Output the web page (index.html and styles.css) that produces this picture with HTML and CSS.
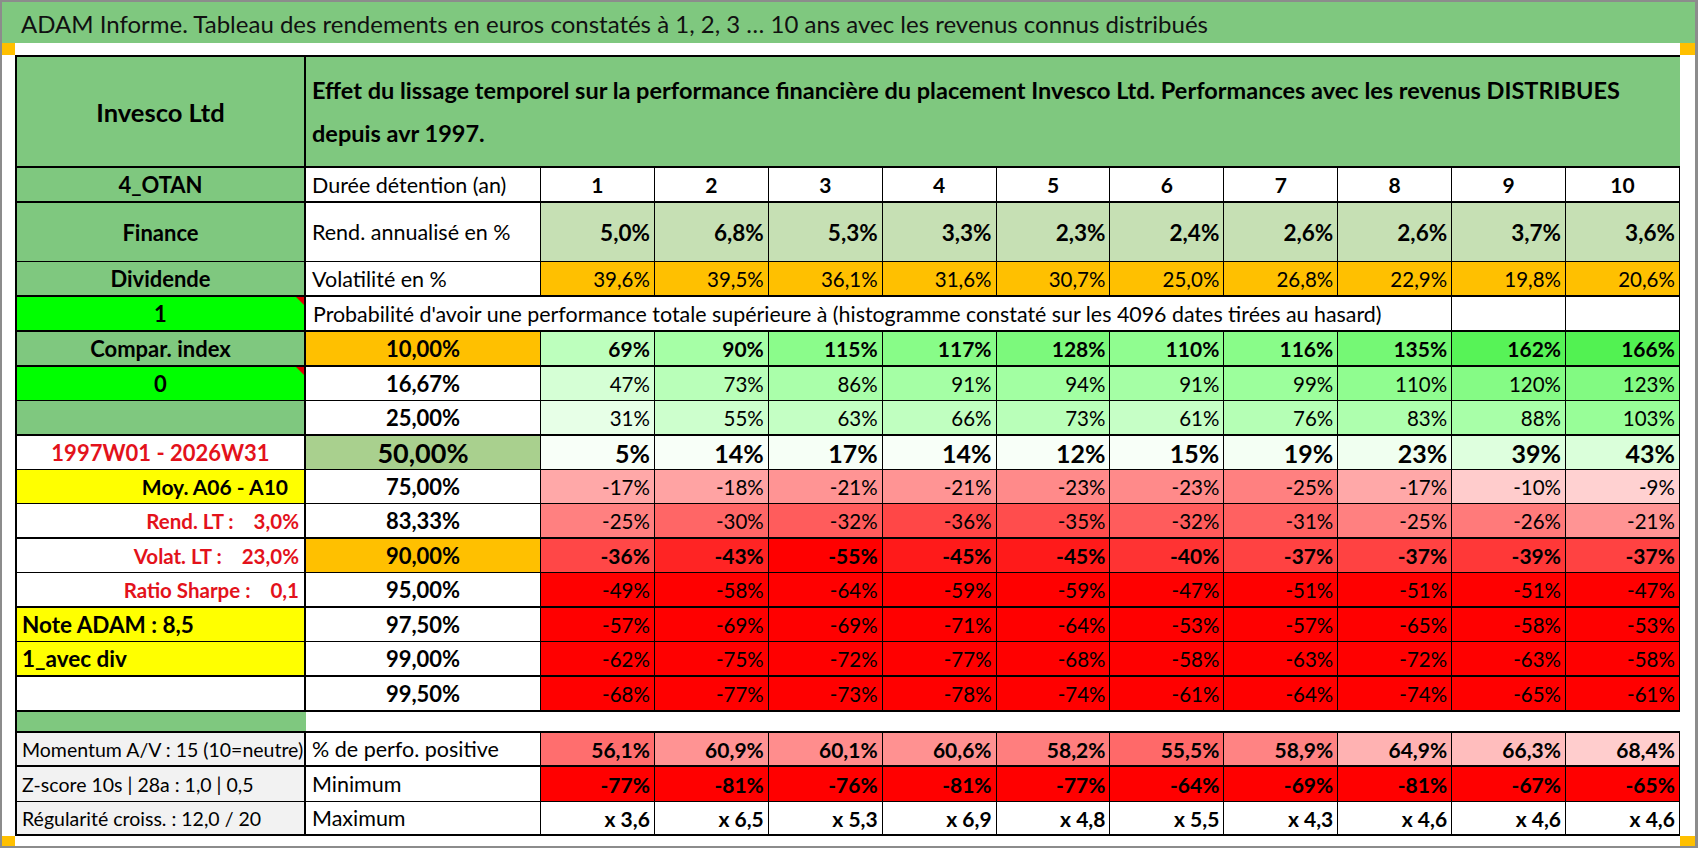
FILE: index.html
```html
<!DOCTYPE html>
<html lang="fr">
<head>
<meta charset="utf-8">
<title>ADAM Informe – Invesco Ltd</title>
<link rel="stylesheet" href="styles.css">
</head>
<body>
<div class="frame">
  <div class="title">ADAM Informe. Tableau des rendements en euros constatés à 1, 2, 3 … 10 ans avec les revenus connus distribués</div>
  <div class="strip"><span class="mark"></span><span class="mark mark-r"></span></div>
  <div class="sheet">
    <div class="row thick">
      <div class="c a big">Invesco Ltd</div>
      <div class="c effet"><span>Effet du lissage temporel sur la performance financière du placement Invesco Ltd. Performances avec les revenus DISTRIBUES<br>depuis avr 1997.</span></div>
    </div>

    <div class="row thick">
      <div class="c a">4_OTAN</div>
      <div class="c b">Durée détention (an)</div>
      <div class="c hd">1</div><div class="c hd">2</div><div class="c hd">3</div><div class="c hd">4</div><div class="c hd">5</div>
      <div class="c hd">6</div><div class="c hd">7</div><div class="c hd">8</div><div class="c hd">9</div><div class="c hd">10</div>
    </div>

    <div class="row">
      <div class="c a">Finance</div>
      <div class="c b">Rend. annualisé en %</div>
      <div class="c n rend">5,0%</div><div class="c n rend">6,8%</div><div class="c n rend">5,3%</div><div class="c n rend">3,3%</div><div class="c n rend">2,3%</div>
      <div class="c n rend">2,4%</div><div class="c n rend">2,6%</div><div class="c n rend">2,6%</div><div class="c n rend">3,7%</div><div class="c n rend">3,6%</div>
    </div>

    <div class="row thick">
      <div class="c a">Dividende</div>
      <div class="c b">Volatilité en %</div>
      <div class="c n vol">39,6%</div><div class="c n vol">39,5%</div><div class="c n vol">36,1%</div><div class="c n vol">31,6%</div><div class="c n vol">30,7%</div>
      <div class="c n vol">25,0%</div><div class="c n vol">26,8%</div><div class="c n vol">22,9%</div><div class="c n vol">19,8%</div><div class="c n vol">20,6%</div>
    </div>

    <div class="row thick">
      <div class="c a lime note">1</div>
      <div class="c prob">Probabilité d'avoir une performance totale supérieure à (histogramme constaté sur les 4096 dates tirées au hasard)</div>
      <div class="c"></div><div class="c"></div>
    </div>

    <div class="row thick">
      <div class="c a">Compar. index</div>
      <div class="c p orange">10,00%</div>
      <div class="c n bd" style="background:rgb(189,255,189)">69%</div>
      <div class="c n bd" style="background:rgb(166,255,166)">90%</div>
      <div class="c n bd" style="background:rgb(139,252,139)">115%</div>
      <div class="c n bd" style="background:rgb(136,252,136)">117%</div>
      <div class="c n bd" style="background:rgb(124,249,124)">128%</div>
      <div class="c n bd" style="background:rgb(144,253,144)">110%</div>
      <div class="c n bd" style="background:rgb(137,252,137)">116%</div>
      <div class="c n bd" style="background:rgb(117,248,117)">135%</div>
      <div class="c n bd" style="background:rgb(87,243,87)">162%</div>
      <div class="c n bd" style="background:rgb(82,242,82)">166%</div>
    </div>

    <div class="row">
      <div class="c a lime note">0</div>
      <div class="c p">16,67%</div>
      <div class="c n" style="background:rgb(213,255,213)">47%</div>
      <div class="c n" style="background:rgb(185,255,185)">73%</div>
      <div class="c n" style="background:rgb(170,255,170)">86%</div>
      <div class="c n" style="background:rgb(165,255,165)">91%</div>
      <div class="c n" style="background:rgb(162,255,162)">94%</div>
      <div class="c n" style="background:rgb(165,255,165)">91%</div>
      <div class="c n" style="background:rgb(156,255,156)">99%</div>
      <div class="c n" style="background:rgb(144,253,144)">110%</div>
      <div class="c n" style="background:rgb(133,251,133)">120%</div>
      <div class="c n" style="background:rgb(130,250,130)">123%</div>
    </div>

    <div class="row thick">
      <div class="c a"></div>
      <div class="c p">25,00%</div>
      <div class="c n" style="background:rgb(231,255,231)">31%</div>
      <div class="c n" style="background:rgb(205,255,205)">55%</div>
      <div class="c n" style="background:rgb(196,255,196)">63%</div>
      <div class="c n" style="background:rgb(192,255,192)">66%</div>
      <div class="c n" style="background:rgb(185,255,185)">73%</div>
      <div class="c n" style="background:rgb(198,255,198)">61%</div>
      <div class="c n" style="background:rgb(181,255,181)">76%</div>
      <div class="c n" style="background:rgb(174,255,174)">83%</div>
      <div class="c n" style="background:rgb(168,255,168)">88%</div>
      <div class="c n" style="background:rgb(152,254,152)">103%</div>
    </div>

    <div class="row">
      <div class="c a white redtxt period">1997W01 - 2026W31</div>
      <div class="c p median">50,00%</div>
      <div class="c n lg" style="background:rgb(248,255,248)">5%</div>
      <div class="c n lg" style="background:rgb(248,255,248)">14%</div>
      <div class="c n lg" style="background:rgb(246,255,246)">17%</div>
      <div class="c n lg" style="background:rgb(248,255,248)">14%</div>
      <div class="c n lg" style="background:rgb(248,255,248)">12%</div>
      <div class="c n lg" style="background:rgb(248,255,248)">15%</div>
      <div class="c n lg" style="background:rgb(244,255,244)">19%</div>
      <div class="c n lg" style="background:rgb(240,255,240)">23%</div>
      <div class="c n lg" style="background:rgb(222,255,222)">39%</div>
      <div class="c n lg" style="background:rgb(218,255,218)">43%</div>
    </div>

    <div class="row">
      <div class="c a yellow rgt moy">Moy. A06 - A10</div>
      <div class="c p">75,00%</div>
      <div class="c n" style="background:rgb(255,168,168)">-17%</div>
      <div class="c n" style="background:rgb(255,163,163)">-18%</div>
      <div class="c n" style="background:rgb(255,148,148)">-21%</div>
      <div class="c n" style="background:rgb(255,148,148)">-21%</div>
      <div class="c n" style="background:rgb(255,138,138)">-23%</div>
      <div class="c n" style="background:rgb(255,138,138)">-23%</div>
      <div class="c n" style="background:rgb(255,128,128)">-25%</div>
      <div class="c n" style="background:rgb(255,168,168)">-17%</div>
      <div class="c n" style="background:rgb(255,204,204)">-10%</div>
      <div class="c n" style="background:rgb(255,209,209)">-9%</div>
    </div>

    <div class="row thick">
      <div class="c a white redtxt rgt">Rend. LT :<span class="val">3,0%</span></div>
      <div class="c p">83,33%</div>
      <div class="c n" style="background:rgb(255,128,128)">-25%</div>
      <div class="c n" style="background:rgb(255,102,102)">-30%</div>
      <div class="c n" style="background:rgb(255,92,92)">-32%</div>
      <div class="c n" style="background:rgb(255,71,71)">-36%</div>
      <div class="c n" style="background:rgb(255,77,77)">-35%</div>
      <div class="c n" style="background:rgb(255,92,92)">-32%</div>
      <div class="c n" style="background:rgb(255,97,97)">-31%</div>
      <div class="c n" style="background:rgb(255,128,128)">-25%</div>
      <div class="c n" style="background:rgb(255,122,122)">-26%</div>
      <div class="c n" style="background:rgb(255,148,148)">-21%</div>
    </div>

    <div class="row">
      <div class="c a white redtxt rgt">Volat. LT :<span class="val">23,0%</span></div>
      <div class="c p orange">90,00%</div>
      <div class="c n bd" style="background:rgb(255,71,71)">-36%</div>
      <div class="c n bd" style="background:rgb(255,36,36)">-43%</div>
      <div class="c n bd red">-55%</div>
      <div class="c n bd" style="background:rgb(255,26,26)">-45%</div>
      <div class="c n bd" style="background:rgb(255,26,26)">-45%</div>
      <div class="c n bd" style="background:rgb(255,51,51)">-40%</div>
      <div class="c n bd" style="background:rgb(255,66,66)">-37%</div>
      <div class="c n bd" style="background:rgb(255,66,66)">-37%</div>
      <div class="c n bd" style="background:rgb(255,56,56)">-39%</div>
      <div class="c n bd" style="background:rgb(255,66,66)">-37%</div>
    </div>

    <div class="row thick">
      <div class="c a white redtxt rgt">Ratio Sharpe :<span class="val">0,1</span></div>
      <div class="c p">95,00%</div>
      <div class="c n red">-49%</div><div class="c n red">-58%</div><div class="c n red">-64%</div><div class="c n red">-59%</div><div class="c n red">-59%</div>
      <div class="c n red">-47%</div><div class="c n red">-51%</div><div class="c n red">-51%</div><div class="c n red">-51%</div><div class="c n red">-47%</div>
    </div>

    <div class="row">
      <div class="c a yellow lft">Note ADAM : 8,5</div>
      <div class="c p">97,50%</div>
      <div class="c n red">-57%</div><div class="c n red">-69%</div><div class="c n red">-69%</div><div class="c n red">-71%</div><div class="c n red">-64%</div>
      <div class="c n red">-53%</div><div class="c n red">-57%</div><div class="c n red">-65%</div><div class="c n red">-58%</div><div class="c n red">-53%</div>
    </div>

    <div class="row thick">
      <div class="c a yellow lft">1_avec div</div>
      <div class="c p">99,00%</div>
      <div class="c n red">-62%</div><div class="c n red">-75%</div><div class="c n red">-72%</div><div class="c n red">-77%</div><div class="c n red">-68%</div>
      <div class="c n red">-58%</div><div class="c n red">-63%</div><div class="c n red">-72%</div><div class="c n red">-63%</div><div class="c n red">-58%</div>
    </div>

    <div class="row thick">
      <div class="c a white"></div>
      <div class="c p">99,50%</div>
      <div class="c n red">-68%</div><div class="c n red">-77%</div><div class="c n red">-73%</div><div class="c n red">-78%</div><div class="c n red">-74%</div>
      <div class="c n red">-61%</div><div class="c n red">-64%</div><div class="c n red">-74%</div><div class="c n red">-65%</div><div class="c n red">-61%</div>
    </div>

    <div class="row thick">
      <div class="c a band"></div>
      <div class="c spacer"></div>
    </div>

    <div class="row thick">
      <div class="c a gray lft">Momentum A/V : 15 (10=neutre)</div>
      <div class="c b">% de perfo. positive</div>
      <div class="c n bd" style="background:rgb(255,110,110)">56,1%</div>
      <div class="c n bd" style="background:rgb(255,147,147)">60,9%</div>
      <div class="c n bd" style="background:rgb(255,141,141)">60,1%</div>
      <div class="c n bd" style="background:rgb(255,145,145)">60,6%</div>
      <div class="c n bd" style="background:rgb(255,126,126)">58,2%</div>
      <div class="c n bd" style="background:rgb(255,105,105)">55,5%</div>
      <div class="c n bd" style="background:rgb(255,131,131)">58,9%</div>
      <div class="c n bd" style="background:rgb(255,178,178)">64,9%</div>
      <div class="c n bd" style="background:rgb(255,189,189)">66,3%</div>
      <div class="c n bd" style="background:rgb(255,205,205)">68,4%</div>
    </div>

    <div class="row">
      <div class="c a gray lft">Z-score 10s | 28a : 1,0 | 0,5</div>
      <div class="c b">Minimum</div>
      <div class="c n bd red">-77%</div><div class="c n bd red">-81%</div><div class="c n bd red">-76%</div><div class="c n bd red">-81%</div><div class="c n bd red">-77%</div>
      <div class="c n bd red">-64%</div><div class="c n bd red">-69%</div><div class="c n bd red">-81%</div><div class="c n bd red">-67%</div><div class="c n bd red">-65%</div>
    </div>

    <div class="row thick">
      <div class="c a gray lft">Régularité croiss. : 12,0 / 20</div>
      <div class="c b">Maximum</div>
      <div class="c n bd">x 3,6</div><div class="c n bd">x 6,5</div><div class="c n bd">x 5,3</div><div class="c n bd">x 6,9</div><div class="c n bd">x 4,8</div>
      <div class="c n bd">x 5,5</div><div class="c n bd">x 4,3</div><div class="c n bd">x 4,6</div><div class="c n bd">x 4,6</div><div class="c n bd">x 4,6</div>
    </div>
  </div>
  <div class="strip strip-bottom"><span class="mark"></span><span class="mark mark-r"></span></div>
</div>
</body>
</html>
```

FILE: styles.css
```css
* {
  box-sizing: border-box;
}

html,
body {
  margin: 0;
  padding: 0;
  background: #ffffff;
}

body {
  font-family: Lato, "Liberation Sans", sans-serif;
  color: #000000;
}

.frame {
  width: 1698px;
  height: 848px;
  border: 2px solid #8c8c8c;
  border-right-width: 3px;
  display: flex;
  flex-direction: column;
  overflow: hidden;
  background: #ffffff;
}

.title {
  flex: none;
  height: 41px;
  background: #7fc87f;
  padding-left: 19px;
  font-size: 24px;
  line-height: 43px;
  white-space: nowrap;
  color: #111111;
}

.strip {
  flex: none;
  height: 12px;
  display: flex;
  justify-content: space-between;
}

.strip-bottom {
  height: 10px;
}

.mark {
  width: 13px;
  background: #ffc000;
}

.mark-r {
  width: 15px;
}

.sheet {
  flex: none;
  margin-left: 13px;
  width: 1665px;
  display: grid;
  grid-template-columns: 291px 235px repeat(10, 113.9px);
  grid-template-rows: 111px 35px 59px 35px 35px 35px 34px 35px 34px 34px 35px 34px 35px 34px 35px 35px 21px 34px 35px 34px;
  border-top: 2px solid #000000;
}

.row {
  display: contents;
}

/* generic cell */
.c {
  display: flex;
  align-items: center;
  min-width: 0;
  overflow: hidden;
  white-space: nowrap;
  border-right: 1px solid #000000;
  border-bottom: 1px solid #000000;
  background: #ffffff;
}

.thick > .c {
  border-bottom-width: 2px;
}

/* first column labels */
.a {
  justify-content: center;
  border-left: 2px solid #000000;
  border-right-width: 2px;
  background: #7fc87f;
  font-weight: 700;
  font-size: 22px;
}

.big {
  font-size: 25.5px;
}

.lime {
  background: #00ff00;
}

.white {
  background: #ffffff;
}

.yellow {
  background: #ffff00;
}

.gray {
  background: #f2f2f2;
  font-weight: 400;
}

.band {
  border-right: none;
}

.redtxt {
  color: #e3121b;
}

.period {
  font-size: 22px;
}

.rgt {
  justify-content: flex-end;
  padding-right: 5px;
  font-size: 20.5px;
}

.moy {
  padding-right: 16px;
  font-size: 21px;
}

.lft {
  justify-content: flex-start;
  padding-left: 5px;
  font-size: 22.5px;
}

.gray.lft {
  font-size: 19.5px;
}

.val {
  margin-left: 20px;
}

.note {
  position: relative;
}

.note::after {
  content: "";
  position: absolute;
  top: 0;
  right: 0;
  border-top: 8px solid #e00000;
  border-left: 8px solid transparent;
}

/* header banner */
.effet {
  grid-column: 2 / -1;
  background: #7fc87f;
  border-right: none;
  padding-left: 6px;
  font-weight: 700;
  font-size: 23.5px;
  line-height: 43px;
}

/* second column */
.b {
  padding-left: 6px;
  font-size: 21.5px;
}

.p {
  justify-content: center;
  font-weight: 700;
  font-size: 22px;
}

.orange {
  background: #ffc000;
}

.median {
  background: #a9d08e;
  font-size: 27px;
}

.prob {
  grid-column: 2 / span 9;
  padding-left: 7px;
  font-size: 21.4px;
}

.spacer {
  grid-column: 2 / -1;
  border-right: none;
}

/* header numbers */
.hd {
  justify-content: center;
  font-weight: 700;
  font-size: 21px;
}

/* data values */
.n {
  justify-content: flex-end;
  padding-right: 4px;
  font-size: 20.5px;
}

.bd {
  font-weight: 700;
  font-size: 21px;
}

.lg {
  font-weight: 700;
  font-size: 25px;
}

.rend {
  background: #c6e0b4;
  font-weight: 700;
  font-size: 22.5px;
}

.vol {
  background: #ffc000;
}

.red {
  background: #ff0000;
}
```
